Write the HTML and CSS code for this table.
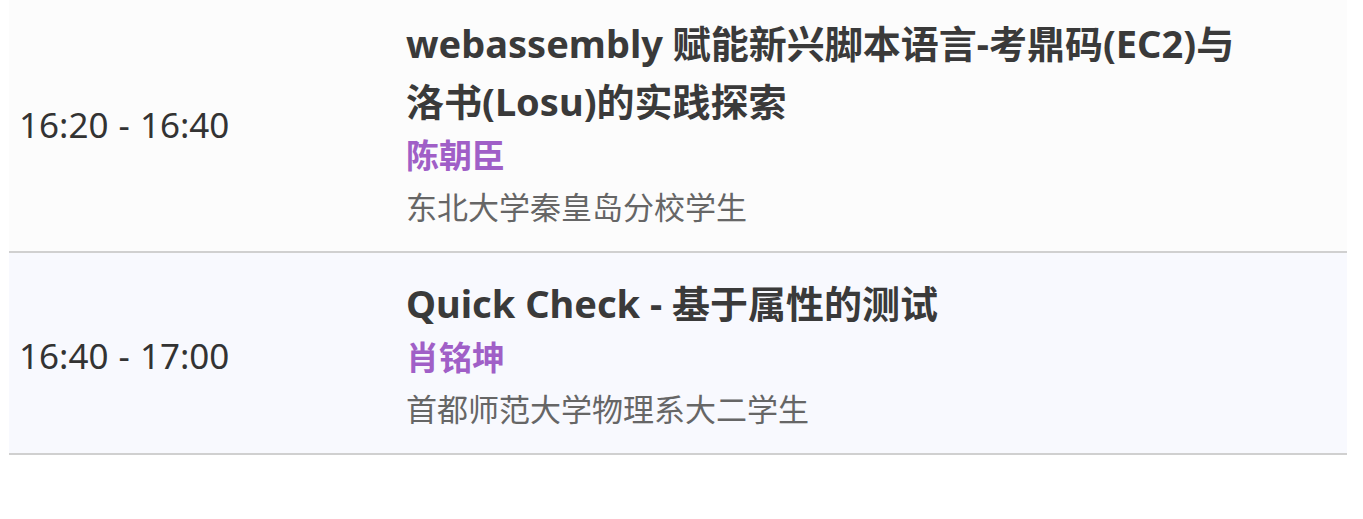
FILE: index.html
```html
<!DOCTYPE html>
<html lang="zh-CN">
<head>
    <meta charset="UTF-8">
    <meta name="viewport" content="width=device-width, initial-scale=1.0">
    <title>Schedule</title>
    <link rel="stylesheet" href="styles.css">
</head>
<body>
    <div class="schedule">
        <div class="session">
            <div class="time">16:20 - 16:40</div>
            <div class="info">
                <div class="title">webassembly 赋能新兴脚本语言-考鼎码(EC2)与洛书(Losu)的实践探索</div>
                <div class="speaker">陈朝臣</div>
                <div class="affiliation">东北大学秦皇岛分校学生</div>
            </div>
        </div>
        <div class="session alt">
            <div class="time">16:40 - 17:00</div>
            <div class="info">
                <div class="title">Quick Check - 基于属性的测试</div>
                <div class="speaker">肖铭坤</div>
                <div class="affiliation">首都师范大学物理系大二学生</div>
            </div>
        </div>
    </div>
</body>
</html>
```

FILE: styles.css
```css
body {
    font-family: "Noto Sans", "Noto Sans CJK SC", sans-serif;
    margin: 0;
    padding: 0;
    background-color: #fff;
    color: #333;
}

.schedule {
    margin: -7px 16px 0 9px;
}

.session {
    display: grid;
    grid-template-columns: 387px 1fr;
    align-items: center;
    padding: 21px 0 17px;
    background-color: #fcfcfc;
    border-bottom: 2px solid #d0d0d0;
}

.session.alt {
    background-color: #f8f9fe;
}

.time,
.info {
    padding: 0 10px;
}

.time {
    font-size: 35px;
    word-spacing: 1px;
    color: #333;
}

.info {
    max-width: 845px;
}

.title {
    font-size: 38px;
    font-weight: bold;
    line-height: 58px;
    color: #3a3a3a;
}

.speaker {
    font-size: 33px;
    font-weight: bold;
    line-height: 51px;
    color: #a05fc7;
}

.affiliation {
    font-size: 31px;
    line-height: 53px;
    color: #666;
}
```
